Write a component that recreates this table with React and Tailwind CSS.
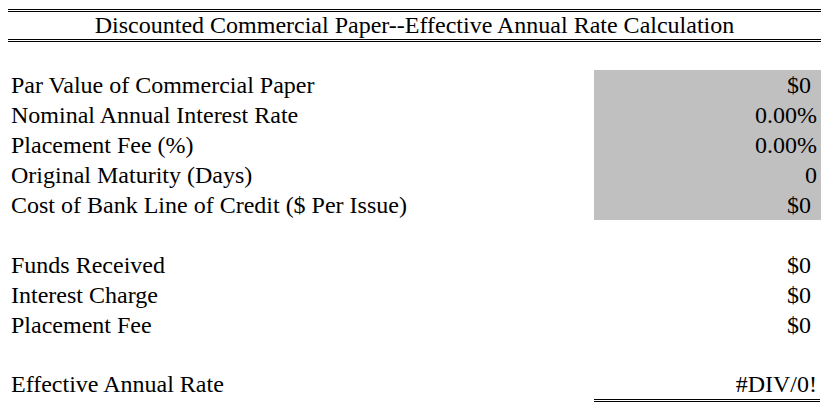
export default function App() {
  // inputs sit in the shaded cells, results below
  const inputs = [
    { label: "Par Value of Commercial Paper", value: "$0", money: true },
    { label: "Nominal Annual Interest Rate", value: "0.00%" },
    { label: "Placement Fee (%)", value: "0.00%" },
    { label: "Original Maturity (Days)", value: "0" },
    { label: "Cost of Bank Line of Credit ($ Per Issue)", value: "$0", money: true },
  ];

  const results = [
    { label: "Funds Received", value: "$0" },
    { label: "Interest Charge", value: "$0" },
    { label: "Placement Fee", value: "$0" },
  ];

  return (
    <div
      className="min-h-screen bg-white text-black pt-[9px] pl-[8px]"
      style={{ fontFamily: '"Liberation Serif", "Times New Roman", serif' }}
    >
      <div className="w-[813px] text-[24px] leading-[30px]">
        {/* Title */}
        <div className="border-y-[3px] border-double border-black h-[33px] flex items-center justify-center">
          <span className="leading-[27px]">
            Discounted Commercial Paper--Effective Annual Rate Calculation
          </span>
        </div>

        <div className="h-[28px]" />

        {/* Inputs */}
        <div className="grid grid-cols-[586px_227px]">
          {inputs.map((row) => (
            <div key={row.label} className="contents">
              <div className="h-[30px] pl-[3px] whitespace-nowrap">{row.label}</div>
              <div
                className={`h-[30px] bg-[#c0c0c0] text-right ${
                  row.money ? "pr-[10px]" : "pr-[4px]"
                }`}
              >
                {row.value}
              </div>
            </div>
          ))}
        </div>

        <div className="h-[30px]" />

        {/* Results */}
        <div className="grid grid-cols-[586px_227px]">
          {results.map((row) => (
            <div key={row.label} className="contents">
              <div className="h-[30px] pl-[3px]">{row.label}</div>
              <div className="h-[30px] text-right pr-[10px]">{row.value}</div>
            </div>
          ))}
        </div>

        <div className="h-[30px]" />

        <div className="grid grid-cols-[586px_226px]">
          <div className="h-[29px] pl-[3px] leading-[29px]">Effective Annual Rate</div>
          <div className="h-[32px] text-right pr-[3px] leading-[29px] border-b-[3px] border-double border-black">
            #DIV/0!
          </div>
        </div>
      </div>
    </div>
  );
}
